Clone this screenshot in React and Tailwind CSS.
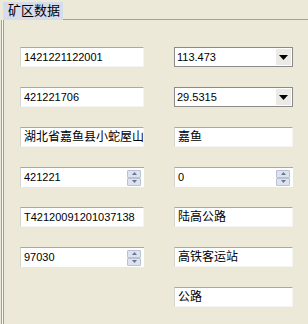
import React from "react";

const font = "font-['Liberation_Sans','Noto_Sans_CJK_SC',sans-serif]";

const Field = ({ value, cn }) => (
  <div
    className={`h-[20px] bg-white border-t border-t-[#a8a8a8] border-l border-l-[#d6d6d0] border-r border-r-[#f4f4f0] border-b border-b-[#f4f4f0] pl-[3px] overflow-hidden whitespace-nowrap text-black ${
      cn ? "text-[12px] leading-[18px]" : "text-[11px] leading-[18px]"
    }`}
  >
    {value}
  </div>
);

const Combo = ({ value }) => (
  <div className="h-[20px] bg-white border border-[#8a8a8a] flex items-stretch">
    <div className="flex-1 pl-[2px] text-[11px] leading-[18px] text-black">{value}</div>
    <div className="w-[15px] my-[1px] mr-[1px] bg-[#eceae4] flex items-center justify-center">
      <svg width="9" height="5" viewBox="0 0 9 5">
        <path d="M0 0h9L4.5 5z" fill="#000" />
      </svg>
    </div>
  </div>
);

const SpinBtn = ({ up }) => (
  <div className="h-[8px] w-[14px] bg-[#dde3ee] border border-[#b8c2d4] rounded-[1px] flex items-center justify-center">
    <svg width="5" height="3" viewBox="0 0 5 3">
      <path d={up ? "M0 3h5L2.5 0z" : "M0 0h5L2.5 3z"} fill="#6a7590" />
    </svg>
  </div>
);

const Spin = ({ value }) => (
  <div className="h-[20px] bg-white border-t border-t-[#a8a8a8] border-l border-l-[#d6d6d0] flex items-stretch">
    <div className="flex-1 pl-[3px] text-[11px] leading-[18px] text-black">{value}</div>
    <div className="flex flex-col justify-center gap-[0px] mr-[3px]">
      <SpinBtn up />
      <SpinBtn />
    </div>
  </div>
);

export default function App() {
  return (
    <div className={`w-[308px] h-[324px] bg-[#ece9d8] flex flex-col ${font}`}>
      {/* Tab strip */}
      <div className="flex h-[20px] items-end">
        <div className="ml-[3px] w-[60px] h-[18px] bg-[#d5dceb] text-[13px] leading-[18px] pl-[5px] text-black whitespace-nowrap">
          矿区数据
        </div>
        <div className="flex-1 h-full border-b border-[#a0a0a0]" />
      </div>

      {/* Panel */}
      <div className="flex-1 flex">
        <div className="w-[1px] ml-[1px] bg-[#a0a0a0]" />
        <div className="w-[1px] bg-[#f8f8f4]" />
        <div className="w-[1px] bg-[#a0a0a0]" />
        <div className="grid grid-cols-[124px_119px] gap-x-[30px] gap-y-[20px] pl-[16px] pt-[27px] content-start">
          <Field value="1421221122001" />
          <Combo value="113.473" />

          <Field value="421221706" />
          <Combo value="29.5315" />

          <Field value="湖北省嘉鱼县小蛇屋山" cn />
          <Field value="嘉鱼" cn />

          <Spin value="421221" />
          <Spin value="0" />

          <Field value="T42120091201037138" />
          <Field value="陆高公路" cn />

          <Spin value="97030" />
          <Field value="高铁客运站" cn />

          <div />
          <Field value="公路" cn />
        </div>
      </div>
    </div>
  );
}
